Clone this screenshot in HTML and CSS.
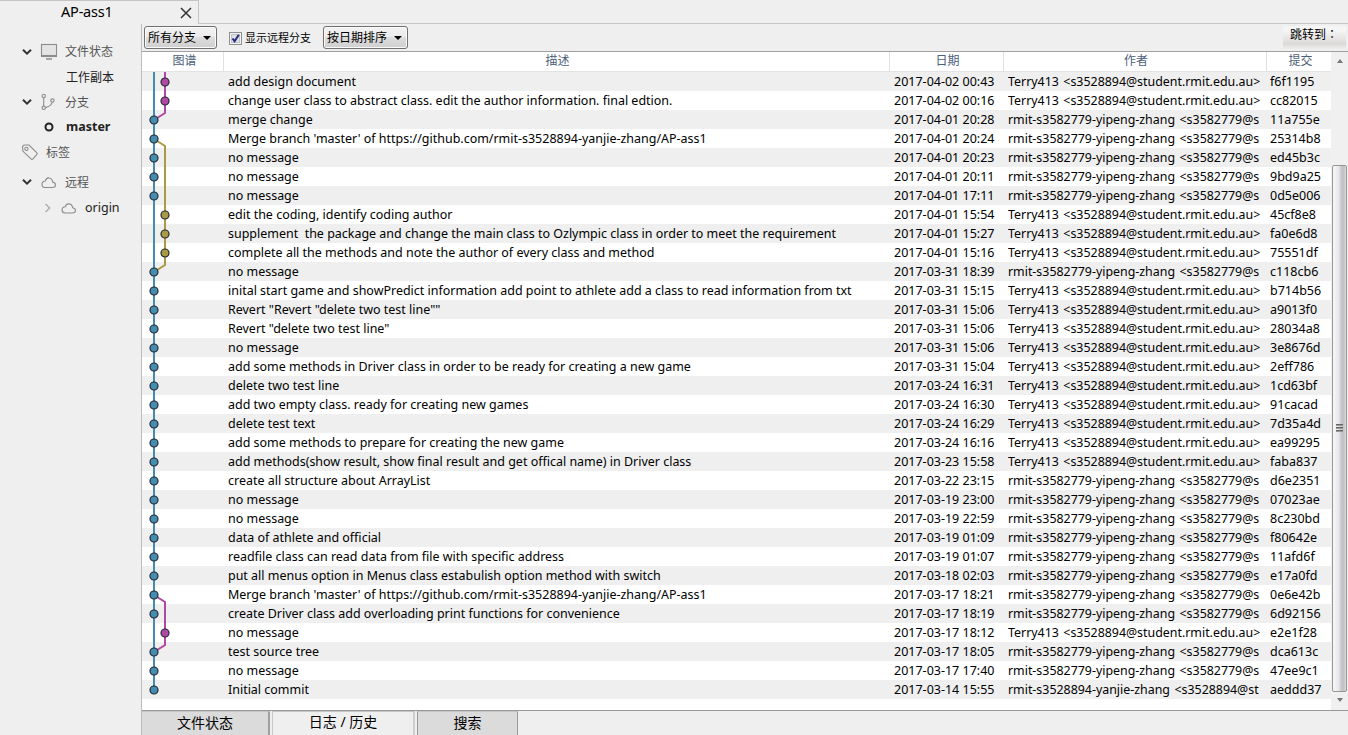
FILE: index.html
```html
<!DOCTYPE html>
<html lang="zh-CN">
<head>
<meta charset="utf-8">
<title>AP-ass1</title>
<link rel="stylesheet" href="styles.css">
</head>
<body>
<div class="app">
  <header class="tabstrip">
    <div class="doc-tab"><span class="doc-name">AP-ass1</span>
      <svg class="close" width="12" height="12" viewBox="0 0 12 12"><path d="M1 1L11 11M11 1L1 11" stroke="#333" stroke-width="1.5" fill="none"/></svg>
    </div>
    <div class="tab-rest"></div>
  </header>
  <div class="body">
    <nav class="sidebar">
      <div class="item h26"><svg class="chev" viewBox="0 0 10 8"><path d="M1 1.7L5 5.7L9 1.7"/></svg>
        <svg class="ico" width="18" height="18" viewBox="0 0 18 18"><rect x="1.5" y="2.5" width="15" height="12" fill="#e4e4e4"/><path d="M1 13.5H17" /><path d="M6 17H12" stroke-width="1.5"/></svg>
        <span class="group">文件状态</span></div>
      <div class="item h25"><span class="leaf">工作副本</span></div>
      <div class="item h25"><svg class="chev" viewBox="0 0 10 8"><path d="M1 1.7L5 5.7L9 1.7"/></svg>
        <svg class="ico" width="18" height="18" viewBox="0 0 18 18"><circle cx="3.7" cy="3" r="1.7"/><circle cx="3.7" cy="14.8" r="1.7"/><circle cx="12.4" cy="7.6" r="1.7"/><path d="M3.7 5V13M12 9.3C11.7 12.8 9 13.8 5.5 14.6"/></svg>
        <span class="group">分支</span></div>
      <div class="item h25"><svg class="ring" width="10" height="10" viewBox="0 0 10 10"><circle cx="5" cy="5" r="3.5"/></svg><span class="current">master</span></div>
      <div class="item h25 tags"><svg class="ico" width="18" height="18" viewBox="0 0 18 18"><path d="M1.5 4.5Q1.5 2 4 2H8L15.7 9.6Q16.7 10.6 15.7 11.6L12 15.9Q11 16.9 10 15.9L2 8.3Z"/><circle cx="5.4" cy="5.9" r="1.6"/></svg><span class="group">标签</span></div>
      <div class="item h35"><svg class="chev" viewBox="0 0 10 8"><path d="M1 1.7L5 5.7L9 1.7"/></svg>
        <svg class="ico" width="18" height="18" viewBox="0 0 18 18"><path d="M5 14.5H12.5C16.5 14.5 16.3 9.6 12.7 9.1C12 4 6.3 3.5 5.4 8C1 8.3 .9 14.1 5 14.5Z"/></svg>
        <span class="group">远程</span></div>
      <div class="item h17"><svg class="sub" width="8" height="10" viewBox="0 0 8 10"><path d="M1.5 1L5.7 5L1.5 9"/></svg>
        <svg class="ico" width="18" height="18" viewBox="0 0 18 18"><path d="M5 14H12.5C16.5 14 16.3 9.3 12.7 8.8C12 4 6.3 3.5 5.4 7.7C1 8 .9 13.6 5 14Z"/></svg>
        <span class="origin">origin</span></div>
    </nav>
    <main class="main">
      <div class="toolbar">
        <div class="select s1"><span>所有分支</span><i class="caret"></i></div>
        <div class="check"><svg class="box" width="13" height="13" viewBox="0 0 13 13"><rect x=".5" y=".5" width="12" height="12" fill="#f4f4f4" stroke="#8e8f8f"/><rect x="2.5" y="2.5" width="8" height="8" fill="#dde1e6" stroke="#bcc3cb"/><path d="M3.5 6.5L5.6 9.2L9.8 2.8" fill="none" stroke="#28287e" stroke-width="2"/></svg><span>显示远程分支</span></div>
        <div class="select s2"><span>按日期排序</span><i class="caret"></i></div>
        <div class="jump" lang="zh-TW">跳转到：</div>
      </div>
      <div class="log">
        <div class="table">
          <div class="head"><div>图谱</div><div>描述</div><div>日期</div><div>作者</div><div>提交</div></div>
          <div class="rows" id="rows"></div>
        </div>
        <div class="scroll">
          <i class="up"></i><div class="thumb"><b></b><b></b><b></b></div><i class="down"></i>
        </div>
      </div>
      <footer class="views"><div class="view v1">文件状态</div><div class="view v2">日志 / 历史</div><div class="view v3">搜索</div></footer>
    </main>
  </div>
</div>
<script src="log.js"></script>
</body>
</html>
```
FILE: styles.css
```css
* { box-sizing: border-box; }
body { margin: 0; background: #efefef; color: #000; font-family: "Noto Sans", "Noto Sans CJK SC", sans-serif; font-size: 12px; overflow: hidden; }
.app { width: 1348px; height: 735px; display: flex; flex-direction: column; }
.tabstrip { height: 24px; display: flex; flex: none; }
.doc-tab { width: 199px; border-top: 1px solid #c4c4c4; border-right: 1px solid #c4c4c4; display: flex; align-items: center; padding-left: 61px; }
.doc-name { font-size: 14.5px; line-height: 20px; width: 119px; letter-spacing: -.2px; margin-top: -3px; }
.close { margin-top: 0; }
.tab-rest { flex: 1; border-bottom: 1px solid #c8c8c8; }
.body { flex: 1; display: flex; min-height: 0; }
.sidebar { width: 141px; padding-top: 14px; flex: none; }
.item { display: flex; align-items: center; padding-left: 22px; white-space: nowrap; }
.h26 { height: 26px; } .h25 { height: 25px; } .h35 { height: 35px; } .h17 { height: 17px; }
.chev { width: 10px; height: 8px; margin-right: 8px; margin-top: 1px; fill: none; stroke: #333; stroke-width: 2; }
.ico { fill: none; stroke: #8c8c8c; stroke-width: 1.1; flex: none; }
.group { color: #555; margin-left: 7px; }
.leaf { margin-left: 44px; color: #222; }
.ring { margin-left: 22px; fill: none; stroke: #222; stroke-width: 2; }
.current { font-weight: bold; font-size: 12.5px; margin-left: 12px; color: #222; }
.tags { padding-left: 21px; }
.sub { margin-left: 22px; margin-right: 8px; fill: none; stroke: #aaa; stroke-width: 1.3; }
.origin { font-size: 12.5px; margin-left: 7px; color: #222; }
.main { flex: 1; display: flex; flex-direction: column; border-left: 1px solid #bcbcbc; min-width: 0; }
.toolbar { height: 27px; flex: none; display: flex; align-items: flex-start; padding: 2px 0 0 2px; }
.select { height: 23px; border: 1px solid #707070; border-radius: 3px; background: linear-gradient(#f2f2f2, #ebebeb 50%, #dddddd 50%, #cfcfcf); display: flex; align-items: center; justify-content: space-between; padding: 0 5px 0 3px; line-height: 20px; box-shadow: inset 0 0 0 1px #fafafa; white-space: nowrap; }
.s1 { width: 73px; } .s2 { width: 85px; }
.caret { border: 4px solid transparent; border-top: 4px solid #000; border-bottom: 0; }
.check { display: flex; align-items: center; height: 24px; margin: 0 12px; gap: 3px; line-height: 20px; white-space: nowrap; font-size: 11px; }
.jump { margin-left: auto; width: 63px; height: 24px; background: linear-gradient(#f5f5f5 20%, #dcdad8 75%, #f2f2f2); padding-left: 7px; line-height: 18px; white-space: nowrap; margin-right: 2px; overflow: hidden; font-family: "Noto Sans", "Noto Sans CJK TC", sans-serif; }
.log { height: 659px; flex: none; border-top: 1px solid #a0a0a0; background: #fff; display: flex; }
.table { width: 1189px; }
.head { height: 20px; display: grid; grid-template-columns: 82px 666px 114px 263px 64px; color: #4c607a; border-bottom: 1px solid #e2e2e2; line-height: 18px; text-align: center; }
.head > div { border-right: 1px solid #e0e0e0; height: 19px; padding-left: 2px; }
.head > div:last-child { border-right: 0; padding-left: 3px; }
.head > div:nth-child(1) { padding-left: 4px; }
.rows { position: relative; }
.row { height: 19px; display: grid; grid-template-columns: 82px 666px 114px 263px 64px; line-height: 19px; font-size: 12.5px; white-space: pre; }
.row:nth-child(odd) { background: #efefef; }
.row > span { margin-left: 4px; overflow: hidden; }
.row .desc { font-size: 12.47px; }
.row .author { margin-right: 7px; font-size: 12.4px; word-spacing: 1.3px; }
.row .hash { margin-left: 3px; }
.graph { position: absolute; left: 0; top: 0; }
.scroll { width: 17px; background: #f0f0f0; display: flex; flex-direction: column; align-items: center; }
.up { border: 3.5px solid transparent; border-bottom: 4px solid #777; border-top: 0; margin: 7px 0 102px; }
.down { border: 3.5px solid transparent; border-top: 4px solid #777; border-bottom: 0; margin-top: 6px; }
.thumb { width: 15px; height: 527px; border: 1px solid #969696; border-radius: 2px; background: linear-gradient(90deg, #f7f7f7, #e8e8ea 45%, #c8cacd 60%, #c0c1c4 85%, #e0e0e0); display: flex; flex-direction: column; align-items: center; justify-content: center; gap: 1px; padding-bottom: 2px; }
.thumb b { width: 7px; height: 2px; background: #666; border-bottom: 1px solid #999; }
.views { flex: 1; display: flex; border-top: 1px solid #999; font-size: 14px; line-height: 22px; text-align: center; }
.view { border-right: 2px solid #bdbdbd; border-top: 1px solid #c4c4c4; }
.v1 { width: 128px; background: #dbdbdb; border-right: 2px solid #a0a0a0; }
.v2 { width: 143px; margin-left: 2px; border-left: 1px solid #c8c8c8; line-height: 20px; border-right-color: #cecece; }
.v3 { width: 101px; margin-left: 2px; background: #dbdbdb; border-left: 1px solid #999; border-right: 1px solid #999; }
```
FILE: log.js
```js
// The author column is narrow, so long addresses are stored cut to its width.
const T = 'Terry413 <s3528894@student.rmit.edu.au>';
const R = 'rmit-s3582779-yipeng-zhang <s3582779@s';
const Y = 'rmit-s3528894-yanjie-zhang <s3528894@st';
const commits = [
  ['add design document', '2017-04-02 00:43', T, 'f6f1195'],
  ['change user class to abstract class. edit the author information. final edtion.', '2017-04-02 00:16', T, 'cc82015'],
  ['merge change', '2017-04-01 20:28', R, '11a755e'],
  ["Merge branch 'master' of https://github.com/rmit-s3528894-yanjie-zhang/AP-ass1", '2017-04-01 20:24', R, '25314b8'],
  ['no message', '2017-04-01 20:23', R, 'ed45b3c'],
  ['no message', '2017-04-01 20:11', R, '9bd9a25'],
  ['no message', '2017-04-01 17:11', R, '0d5e006'],
  ['edit the coding, identify coding author', '2017-04-01 15:54', T, '45cf8e8'],
  ['supplement  the package and change the main class to Ozlympic class in order to meet the requirement', '2017-04-01 15:27', T, 'fa0e6d8'],
  ['complete all the methods and note the author of every class and method', '2017-04-01 15:16', T, '75551df'],
  ['no message', '2017-03-31 18:39', R, 'c118cb6'],
  ['inital start game and showPredict information add point to athlete add a class to read information from txt', '2017-03-31 15:15', T, 'b714b56'],
  ['Revert "Revert "delete two test line""', '2017-03-31 15:06', T, 'a9013f0'],
  ['Revert "delete two test line"', '2017-03-31 15:06', T, '28034a8'],
  ['no message', '2017-03-31 15:06', T, '3e8676d'],
  ['add some methods in Driver class in order to be ready for creating a new game', '2017-03-31 15:04', T, '2eff786'],
  ['delete two test line', '2017-03-24 16:31', T, '1cd63bf'],
  ['add two empty class. ready for creating new games', '2017-03-24 16:30', T, '91cacad'],
  ['delete test text', '2017-03-24 16:29', T, '7d35a4d'],
  ['add some methods to prepare for creating the new game', '2017-03-24 16:16', T, 'ea99295'],
  ['add methods(show result, show final result and get offical name) in Driver class', '2017-03-23 15:58', T, 'faba837'],
  ['create all structure about ArrayList', '2017-03-22 23:15', R, 'd6e2351'],
  ['no message', '2017-03-19 23:00', R, '07023ae'],
  ['no message', '2017-03-19 22:59', R, '8c230bd'],
  ['data of athlete and official', '2017-03-19 01:09', R, 'f80642e'],
  ['readfile class can read data from file with specific address', '2017-03-19 01:07', R, '11afd6f'],
  ['put all menus option in Menus class estabulish option method with switch', '2017-03-18 02:03', R, 'e17a0fd'],
  ["Merge branch 'master' of https://github.com/rmit-s3528894-yanjie-zhang/AP-ass1", '2017-03-17 18:21', R, '0e6e42b'],
  ['create Driver class add overloading print functions for convenience', '2017-03-17 18:19', R, '6d92156'],
  ['no message', '2017-03-17 18:12', T, 'e2e1f28'],
  ['test source tree', '2017-03-17 18:05', R, 'dca613c'],
  ['no message', '2017-03-17 17:40', R, '47ee9c1'],
  ['Initial commit', '2017-03-14 15:55', Y, 'aeddd37']
];
const rows = document.getElementById('rows');
const names = ['desc', 'date', 'author', 'hash'];
for (const c of commits) {
  const row = document.createElement('div');
  row.className = 'row';
  row.appendChild(document.createElement('div'));
  c.forEach((text, i) => {
    const cell = document.createElement('span');
    cell.className = names[i];
    cell.textContent = text;
    row.appendChild(cell);
  });
  rows.appendChild(row);
}
// Branch lanes, then one dot per commit.
const lane = { 0: '#b148a5', 1: '#b148a5', 7: '#ab9a43', 8: '#ab9a43', 9: '#ab9a43', 29: '#b148a5' };
let svg = '<svg class="graph" width="82" height="627" fill="none" stroke-width="2">' +
  '<path d="M23 0V41L12 48M12 523L23 530V573L12 580" stroke="#b148a5"/>' +
  '<path d="M12 67L23 74V193L12 200" stroke="#ab9a43"/>' +
  '<path d="M12 0V618" stroke="#448cb0"/>';
commits.forEach((c, i) => {
  svg += `<circle cx="${lane[i] ? 23 : 12}" cy="${10 + 19 * i}" r="4" fill="${lane[i] || '#448cb0'}" stroke="#222b33" stroke-width="1.2"/>`;
});
rows.insertAdjacentHTML('beforeend', svg + '</svg>');
```
